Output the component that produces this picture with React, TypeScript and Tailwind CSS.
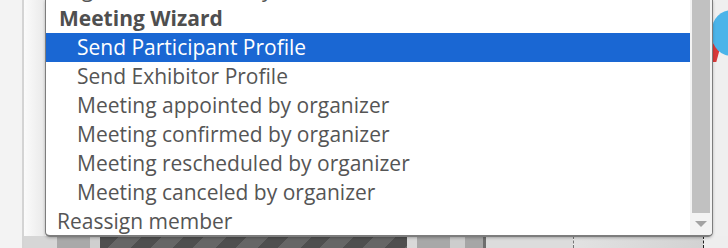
const options: { label: string; kind: 'group' | 'child' | 'top'; selected?: boolean }[] = [
  { label: 'Registration summary', kind: 'top' },
  { label: 'Meeting Wizard', kind: 'group' },
  { label: 'Send Participant Profile', kind: 'child', selected: true },
  { label: 'Send Exhibitor Profile', kind: 'child' },
  { label: 'Meeting appointed by organizer', kind: 'child' },
  { label: 'Meeting confirmed by organizer', kind: 'child' },
  { label: 'Meeting rescheduled by organizer', kind: 'child' },
  { label: 'Meeting canceled by organizer', kind: 'child' },
  { label: 'Reassign member', kind: 'top' },
]

function OptionRow({ label, kind, selected }: { label: string; kind: string; selected?: boolean }) {
  if (kind === 'group') {
    return <div className="h-[29px] pl-[13px] font-bold text-[#4f4f4f]">{label}</div>
  }
  return (
    <div
      className={
        'h-[29px] whitespace-nowrap ' +
        (kind === 'child' ? 'pl-[31px] ' : 'pl-[11px] ') +
        (selected ? 'bg-[#1a67d3] text-white' : 'text-[#555555]')
      }
    >
      {label}
    </div>
  )
}

export default function App() {
  return (
    <div className="relative h-[248px] w-[728px] overflow-hidden bg-[#f2f2f2] font-['Open_Sans',sans-serif]">
      {/* page behind the open list */}
      <div className="flex h-full">
        <div className="w-[22px] bg-[#f3f3f3]" />
        <div className="w-[2px] bg-[#d4d4d4]" />
        <div className="flex flex-1 flex-col">
          <div className="flex flex-1">
            <div className="w-[21px] bg-gradient-to-r from-[#fbfbfb] to-[#e9e9e9]" />
            <div className="flex-1 bg-white" />
            <div className="relative w-[16px] bg-[#efefef]">
              <div className="absolute left-[-1px] top-[42px] h-[20px] w-[8px] skew-x-[-15deg] bg-[#d83a3a]" />
              <div className="absolute left-0 top-[10px] h-[46px] w-[40px] rounded-full bg-[#4bb4e9]" />
            </div>
          </div>
          <div className="flex h-[12px]">
            <div className="w-[33px] bg-[#d6d6d6]" />
            <div className="w-[33px] bg-[#a9a9a9]" />
            <div className="w-[10px] bg-[#cfcfcf]" />
            <div className="w-[307px] bg-[repeating-linear-gradient(135deg,#4f4f4f_0px,#4f4f4f_14px,#666666_14px,#666666_30px)]" />
            <div className="w-[10px] bg-[#d9d9d9]" />
            <div className="w-[33px] bg-[#a8a8a8]" />
            <div className="w-[15px] bg-[#cdcdcd]" />
            <div className="w-[18px] bg-[#a6a6a6]" />
            <div className="w-[3px] bg-[#6e6e6e]" />
            <div className="w-[87px] bg-[#dcdcdc]" />
            <div className="w-[1px] border-l border-dashed border-[#777]" />
            <div className="w-[129px] bg-gradient-to-r from-[#e2e2e2] to-[#d2d2d2]" />
            <div className="w-[1px] border-l border-dashed border-[#222]" />
            <div className="flex-1 bg-[#eeeeee]" />
          </div>
        </div>
      </div>

      {/* open select list */}
      <div className="absolute left-[45px] top-0 flex h-[237px] w-[668px] overflow-hidden rounded-b-[5px] border-b-2 border-l border-r border-[#7d7d7d] bg-white shadow-[0_1px_3px_rgba(0,0,0,0.25)]">
        <div className="mt-[-25px] flex-1 text-[21px] leading-[29px]">
          {options.map((o) => (
            <OptionRow key={o.label} {...o} />
          ))}
        </div>
        <div className="flex w-[22px] flex-col bg-[#f3f3f3] pl-[2px] pr-[2px]">
          <div className="h-[213px] bg-[#c1c1c1]" />
          <div className="flex flex-1 items-center justify-center">
            <div className="h-0 w-0 border-l-[6px] border-r-[6px] border-t-[6px] border-l-transparent border-r-transparent border-t-[#a3a3a3]" />
          </div>
        </div>
      </div>
    </div>
  )
}
